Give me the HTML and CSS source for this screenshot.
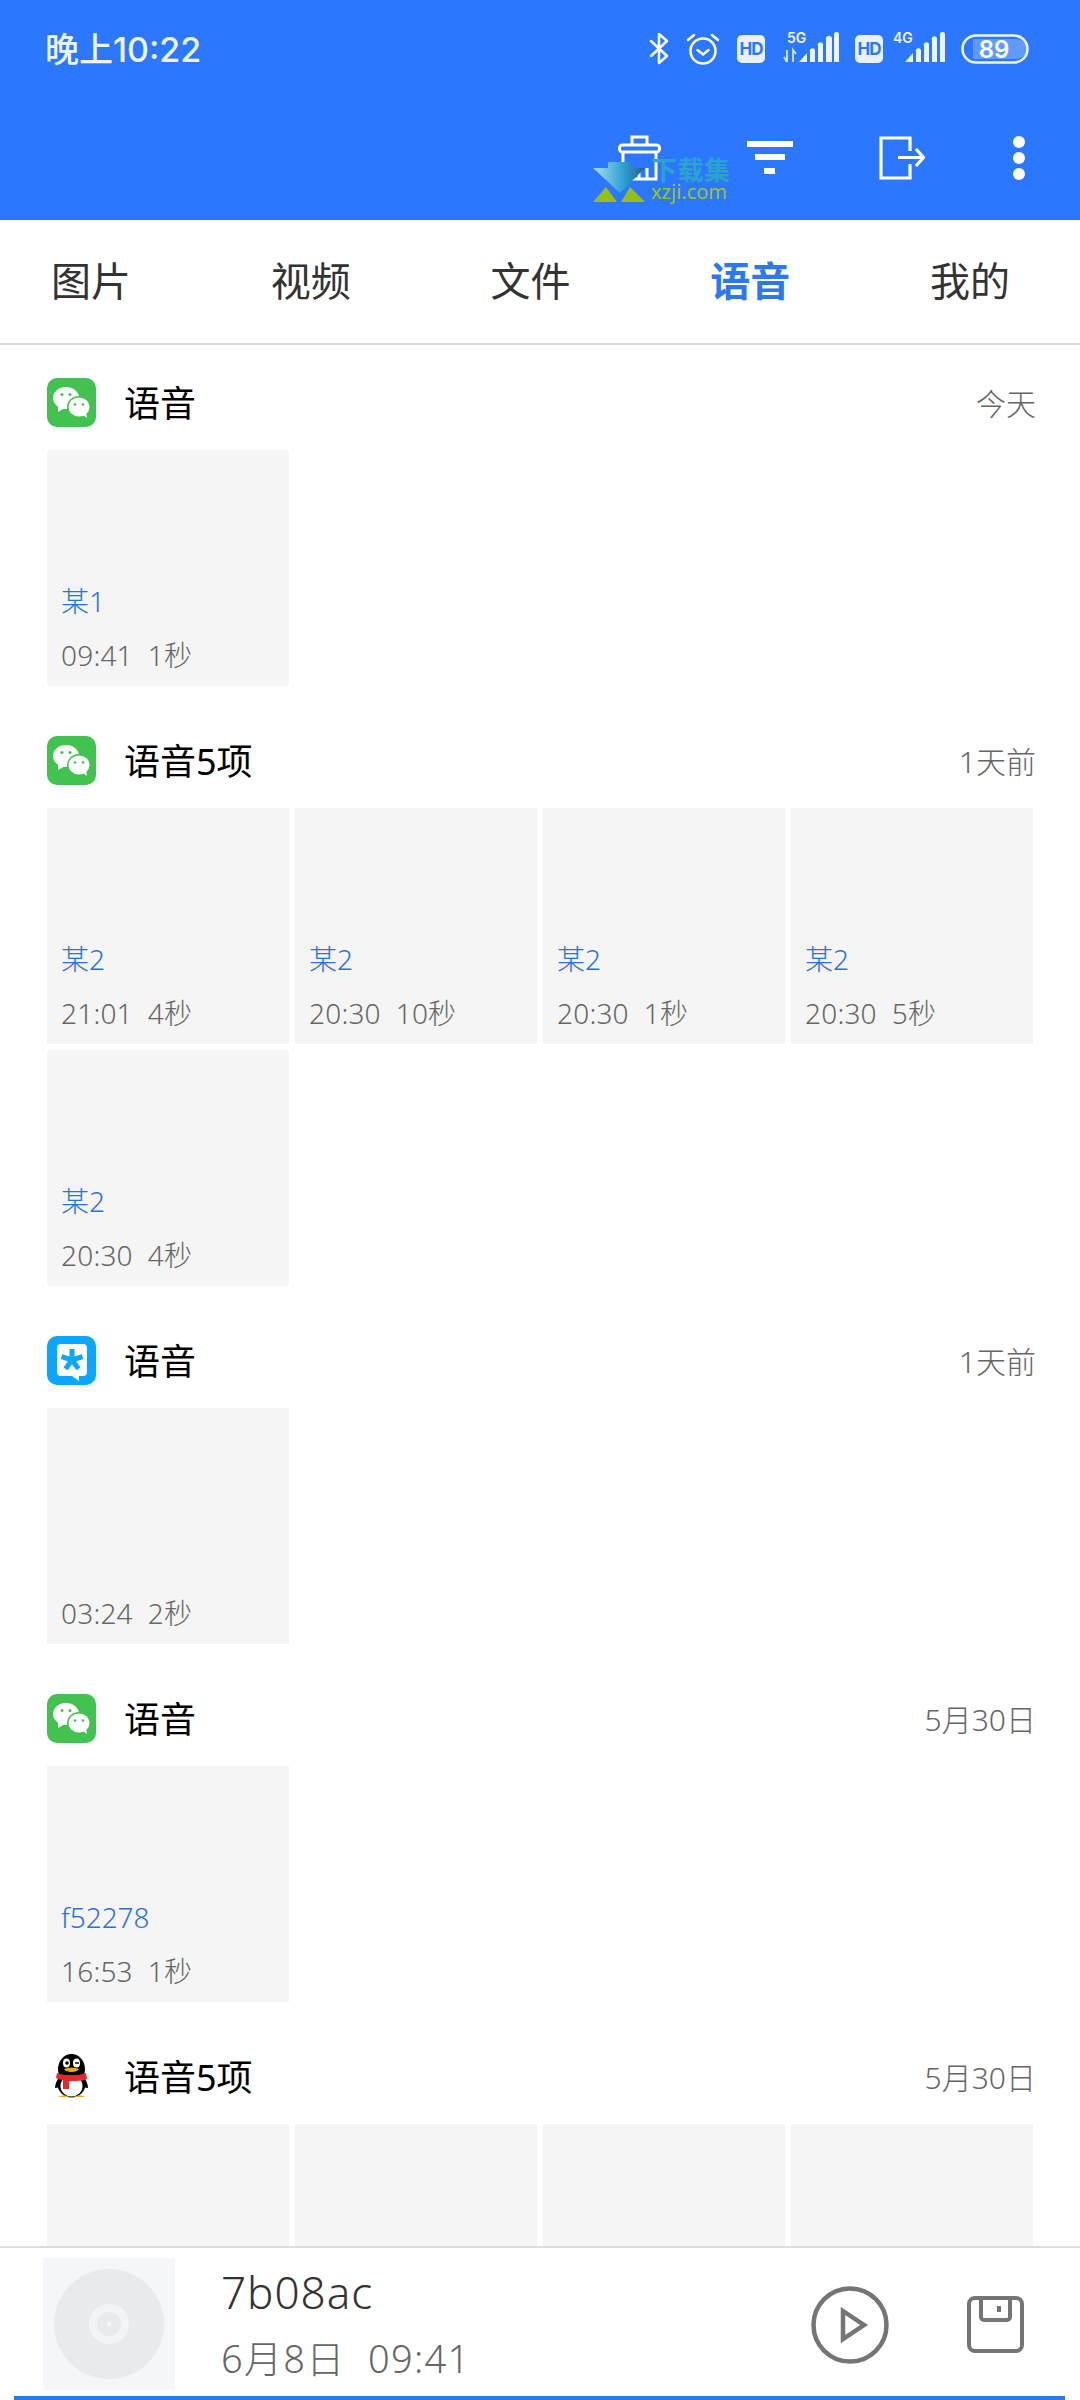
FILE: index.html
```html
<!DOCTYPE html>
<html lang="zh-CN">
<head>
    <meta charset="UTF-8">
    <meta name="viewport" content="width=device-width, initial-scale=1.0">
    <title>语音</title>
    <link rel="stylesheet" href="styles.css">
</head>
<body>
    <svg class="defs" width="0" height="0">
        <symbol id="wechat" viewBox="0 0 49 49">
            <rect width="49" height="49" rx="10" fill="#42c34f"/>
            <ellipse cx="19" cy="20" rx="13" ry="11" fill="#fff"/>
            <path d="M11 27l0 7 7-4z" fill="#fff"/>
            <ellipse cx="32" cy="29" rx="12" ry="11" fill="#42c34f"/>
            <ellipse cx="32" cy="29" rx="10.500" ry="9.500" fill="#fff"/>
            <path d="M36 37l4 3-1-6z" fill="#fff"/>
            <circle cx="15" cy="16.500" r="1.500" fill="#42c34f"/>
            <circle cx="23" cy="16.500" r="1.500" fill="#42c34f"/>
            <circle cx="28" cy="26.500" r="1.300" fill="#42c34f"/>
            <circle cx="36" cy="26.500" r="1.300" fill="#42c34f"/>
        </symbol>
        <symbol id="tim" viewBox="0 0 49 49">
            <rect width="49" height="49" rx="10" fill="#0aa6ff"/>
            <path d="M14 8h22a4 4 0 0 1 4 4v24a4 4 0 0 1-4 4h-4v5l-7-5H14a4 4 0 0 1-4-4V12a4 4 0 0 1 4-4z" fill="#fff"/>
            <path d="M25 24V13M25 24l10.500-3.400M25 24l6.500 8.900M25 24l-6.500 8.900M25 24l-10.500-3.400" stroke="#0aa6ff" stroke-width="5"/>
        </symbol>
        <symbol id="qq" viewBox="0 0 49 49">
            <path d="M13 24c-3 4-5 8-5 12 3 0 5-2 6-3zM36 24c3 4 5 8 5 12-3 0-5-2-6-3z" fill="#000"/>
            <ellipse cx="24.500" cy="17" rx="13.500" ry="15" fill="#000"/>
            <ellipse cx="24.500" cy="32" rx="14" ry="13.500" fill="#000"/>
            <ellipse cx="24.500" cy="34" rx="11" ry="10.500" fill="#fff"/>
            <ellipse cx="19.500" cy="11" rx="3.500" ry="4.500" fill="#fff"/>
            <ellipse cx="29.500" cy="11" rx="3.500" ry="4.500" fill="#fff"/>
            <circle cx="20" cy="11" r="1.800" fill="#000"/>
            <path d="M28 11h4" stroke="#000" stroke-width="1.500"/>
            <path d="M10 21c9 3 20 3 29 0l1 6c-3 1-6 2-11 2H22v8h-6v-9c-3 0-5-1-7-2z" fill="#e9262c"/>
            <path d="M17 17c5-2 10-2 15 0-2 4-13 4-15 0z" fill="#f5a81c"/>
            <path d="M11 45c3-2 9-2 11 0zM27 45c3-2 9-2 11 0z" fill="#f5a81c"/>
        </symbol>
    </svg>

    <div class="app">
        <header class="top">
            <div class="status">
                <span class="time">晚上10:22</span>
                <div class="status-icons">
                    <svg width="20" height="33" viewBox="0 0 20 33" fill="none" stroke="#fff" stroke-width="2.500" stroke-linejoin="round" stroke-linecap="round">
                        <path d="M2 9l16 15-8 7V2l8 7L2 24"/>
                    </svg>
                    <svg width="34" height="33" viewBox="0 0 34 33" fill="none" stroke="#fff" stroke-width="2.500" stroke-linecap="round" stroke-linejoin="round">
                        <circle cx="17" cy="19" r="12.500"/>
                        <path d="M11.500 18l5.500 4.500 5.500-4.500M2 8l6-5M32 8l-6-5"/>
                    </svg>
                    <span class="hd">HD</span>
                    <svg class="sig" width="56" height="34" viewBox="0 -4 56 34">
                        <text class="net" x="4" y="11">5G</text>
                        <path d="M4 18v12M1 25l3 5M10 30V18l3 4" fill="none" stroke="#fff" stroke-width="1.800" opacity=".8"/>
                        <path d="M16 30l8-9v9zM27 20a2 2 0 0 1 5-2v12h-5zM35 14a2 2 0 0 1 5-2v18h-5zM43 8a2 2 0 0 1 6-2v24h-6zM51 3a2 2 0 0 1 5-1v28h-5z" fill="#eef4ff"/>
                    </svg>
                    <span class="hd">HD</span>
                    <svg class="sig" width="52" height="34" viewBox="0 -4 52 34">
                        <text class="net" x="0" y="11">4G</text>
                        <path d="M12 30l8-9v9zM23 20a2 2 0 0 1 5-2v12h-5zM31 14a2 2 0 0 1 5-2v18h-5zM39 8a2 2 0 0 1 5-2v24h-5zM47 3a2 2 0 0 1 5-1v28h-5z" fill="#eef4ff"/>
                    </svg>
                    <svg width="68" height="30" viewBox="0 0 68 30">
                        <rect x="1.500" y="1.500" width="65" height="27" rx="13.500" fill="none" stroke="#eef4ff" stroke-width="2.500"/>
                        <path d="M16 5h40a10 10 0 0 1 0 20H16a3 3 0 0 1-4-4V9a3 3 0 0 1 4-4z" fill="#fff" opacity=".25"/>
                        <text class="batt" x="33" y="23.500">89</text>
                    </svg>
                </div>
            </div>
            <div class="toolbar">
                <svg width="43" height="46" viewBox="0 0 43 46" fill="none" stroke="#fff" stroke-width="3">
                    <path d="M14 10V2h15v8"/>
                    <rect x="1.500" y="10" width="40" height="7" rx="3"/>
                    <path d="M5 17v27h33V17M14 44V33M21 44V33M29 44V33"/>
                </svg>
                <svg width="46" height="34" viewBox="0 0 46 34" fill="#fff">
                    <rect width="46" height="6"/>
                    <rect x="8" y="13" width="30" height="6"/>
                    <rect x="17" y="27" width="11" height="6"/>
                </svg>
                <svg width="46" height="44" viewBox="0 0 46 44" fill="none" stroke="#fff" stroke-width="3.200">
                    <path d="M31 15V2H2v40h29V28"/>
                    <path d="M19 21.500h25M37 13l7.500 8.500-7.500 8.500"/>
                </svg>
                <svg width="16" height="48" viewBox="0 0 16 48" fill="#fff">
                    <circle cx="8" cy="8" r="6"/>
                    <circle cx="8" cy="24" r="6"/>
                    <circle cx="8" cy="40" r="6"/>
                </svg>
            </div>

            <!-- site watermark sitting on the toolbar -->
            <div class="mark">
                <svg class="mark-logo" width="52" height="42" viewBox="0 0 52 42">
                    <defs>
                        <linearGradient id="arrow" x1="0" y1="0" x2="1" y2="0">
                            <stop offset="0" stop-color="#a8def0"/>
                            <stop offset=".6" stop-color="#2a9fd2"/>
                            <stop offset="1" stop-color="#2c5f86"/>
                        </linearGradient>
                    </defs>
                    <path d="M0 7h15V1h23v6h14L27 32z" fill="url(#arrow)"/>
                    <path d="M0 41l13-15 11 15zM28 41l9-15 15 15z" fill="#93bf17"/>
                </svg>
                <div class="mark-text">
                    <span class="mark-cn">下载集</span>
                    <span class="mark-en">xzji.com</span>
                </div>
            </div>
        </header>

        <nav class="tabs">
            <span>图片</span>
            <span>视频</span>
            <span>文件</span>
            <span class="on">语音</span>
            <span>我的</span>
        </nav>

        <main class="list">
            <section class="group">
                <div class="group-head">
                    <svg class="app-icon"><use href="#wechat"/></svg>
                    <span class="group-title">语音</span>
                    <span class="group-date">今天</span>
                </div>
                <div class="cards">
                    <div class="card"><p class="who">某1</p><p class="meta">09:41&nbsp;&nbsp;1秒</p></div>
                </div>
            </section>

            <section class="group">
                <div class="group-head">
                    <svg class="app-icon"><use href="#wechat"/></svg>
                    <span class="group-title">语音5项</span>
                    <span class="group-date">1天前</span>
                </div>
                <div class="cards">
                    <div class="card"><p class="who">某2</p><p class="meta">21:01&nbsp;&nbsp;4秒</p></div>
                    <div class="card"><p class="who">某2</p><p class="meta">20:30&nbsp;&nbsp;10秒</p></div>
                    <div class="card"><p class="who">某2</p><p class="meta">20:30&nbsp;&nbsp;1秒</p></div>
                    <div class="card"><p class="who">某2</p><p class="meta">20:30&nbsp;&nbsp;5秒</p></div>
                    <div class="card"><p class="who">某2</p><p class="meta">20:30&nbsp;&nbsp;4秒</p></div>
                </div>
            </section>

            <section class="group">
                <div class="group-head">
                    <svg class="app-icon"><use href="#tim"/></svg>
                    <span class="group-title">语音</span>
                    <span class="group-date">1天前</span>
                </div>
                <div class="cards">
                    <div class="card"><p class="meta">03:24&nbsp;&nbsp;2秒</p></div>
                </div>
            </section>

            <section class="group">
                <div class="group-head">
                    <svg class="app-icon"><use href="#wechat"/></svg>
                    <span class="group-title">语音</span>
                    <span class="group-date">5月30日</span>
                </div>
                <div class="cards">
                    <div class="card"><p class="who">f52278</p><p class="meta">16:53&nbsp;&nbsp;1秒</p></div>
                </div>
            </section>

            <section class="group">
                <div class="group-head">
                    <svg class="app-icon"><use href="#qq"/></svg>
                    <span class="group-title">语音5项</span>
                    <span class="group-date">5月30日</span>
                </div>
                <div class="cards">
                    <div class="card"></div>
                    <div class="card"></div>
                    <div class="card"></div>
                    <div class="card"></div>
                </div>
            </section>
        </main>

        <footer class="player">
            <div class="cover">
                <svg width="110" height="110" viewBox="0 0 110 110">
                    <circle cx="55" cy="55" r="55" fill="#e8eaed"/>
                    <circle cx="55" cy="55" r="20" fill="#f2f4f7"/>
                    <circle cx="55" cy="55" r="12" fill="#e8eaed"/>
                    <circle cx="55" cy="55" r="2" fill="#f7f8fa"/>
                </svg>
            </div>
            <div class="track">
                <p class="track-name">7b08ac</p>
                <p class="track-date">6月8日&nbsp;&nbsp;09:41</p>
            </div>
            <svg class="play" width="78" height="78" viewBox="0 0 78 78" fill="none" stroke="#757575" stroke-width="4.500">
                <circle cx="39" cy="39" r="36.500"/>
                <path d="M32 25l21 14-21 14z"/>
            </svg>
            <svg class="save" width="57" height="57" viewBox="0 0 57 57" fill="none" stroke="#757575" stroke-width="4">
                <rect x="2" y="2" width="53" height="53" rx="6"/>
                <path d="M14 2v19a3 3 0 0 0 3 3h23a3 3 0 0 0 3-3V2M32 10v6"/>
            </svg>
            <div class="progress"></div>
        </footer>
    </div>
</body>
</html>
```

FILE: styles.css
```css
* {
    box-sizing: border-box;
}

body {
    margin: 0;
    background: #fff;
    font-family: "Noto Sans", "Noto Sans CJK SC", sans-serif;
}

p {
    margin: 0;
}

.defs {
    position: absolute;
}

.app {
    width: 1080px;
    height: 2400px;
    display: flex;
    flex-direction: column;
    overflow: hidden;
}

/* blue header */
.top {
    position: relative;
    height: 220px;
    flex: none;
    background: #2b78ff;
    padding-top: 32px;
}

.status {
    display: flex;
    align-items: center;
    height: 33px;
    padding: 0 51px 0 45px;
    color: #eef4ff;
}

.time {
    margin-top: -3px;
    font-family: "Inter", "Noto Sans CJK SC", sans-serif;
    font-size: 34px;
    font-weight: 500;
}

.status-icons {
    display: flex;
    align-items: center;
    margin-left: auto;
}

.status-icons svg:nth-child(1),
.status-icons svg:nth-child(2) {
    margin-right: 17px;
}

.status-icons .sig {
    margin-bottom: 7px;
}

.status-icons svg:nth-child(4) {
    margin-left: 18px;
    margin-right: 16px;
}

.status-icons svg:nth-child(6) {
    margin-left: 10px;
    margin-right: 16px;
}

.hd {
    width: 28px;
    height: 28px;
    border-radius: 5px;
    background: #e9f1ff;
    color: #2b78ff;
    font-family: "Inter", sans-serif;
    font-size: 17px;
    font-weight: 700;
    line-height: 28px;
    text-align: center;
    letter-spacing: -1px;
}

.net {
    font-family: "Inter", sans-serif;
    font-size: 14px;
    font-weight: 600;
    fill: #eef4ff;
}

.batt {
    font-family: "Inter", sans-serif;
    font-size: 24px;
    font-weight: 600;
    fill: #fff;
    text-anchor: middle;
}

.toolbar {
    display: flex;
    align-items: center;
    justify-content: flex-end;
    gap: 86px;
    height: 48px;
    margin-top: 69px;
    padding-right: 53px;
}

.mark {
    position: absolute;
    left: 593px;
    top: 159px;
    display: flex;
    gap: 6px;
}

.mark-logo {
    margin-top: 2px;
}

.mark-text {
    display: flex;
    flex-direction: column;
}

.mark-cn {
    font-size: 26px;
    font-weight: 700;
    line-height: 23px;
    letter-spacing: 0.5px;
    color: #2ba2cf;
}

.mark-en {
    font-size: 20px;
    line-height: 20px;
    color: #9ac31c;
}

/* tabs */
.tabs {
    height: 125px;
    flex: none;
    display: flex;
    align-items: center;
    justify-content: space-between;
    padding: 0 70px 5px 51px;
    border-bottom: 2px solid #ddd;
    font-size: 40px;
    color: #333;
}

.tabs .on {
    color: #2b78f0;
    font-weight: 700;
}

/* list of groups */
.list {
    flex: 1;
    min-height: 0;
    overflow: hidden;
    padding: 33px 44px 0 47px;
}

.group {
    margin-bottom: 50px;
}

.group-head {
    display: flex;
    align-items: center;
    height: 49px;
    margin-bottom: 23px;
}

.app-icon {
    width: 49px;
    height: 49px;
    flex: none;
}

.group-title {
    margin: -2px 0 0 28px;
    font-size: 36px;
    color: #000;
}

.group-date {
    margin: -2px 0 0 auto;
    font-size: 30px;
    font-weight: 300;
    color: #666;
}

.cards {
    display: grid;
    grid-template-columns: repeat(4, 242px);
    gap: 6px;
}

.card {
    height: 236px;
    display: flex;
    flex-direction: column;
    justify-content: flex-end;
    padding: 0 14px 11px;
    background: #f5f5f5;
}

.who {
    margin-bottom: 14px;
    font-size: 28px;
    font-weight: 300;
    line-height: 40px;
    color: #2b70e0;
}

.meta {
    font-size: 28px;
    font-weight: 300;
    line-height: 40px;
    letter-spacing: 0.2px;
    color: #666;
}

/* bottom player */
.player {
    position: relative;
    height: 154px;
    flex: none;
    display: flex;
    align-items: flex-start;
    padding: 10px 56px 0 43px;
    border-top: 2px solid #ddd;
    background: #fff;
}

.cover {
    width: 132px;
    height: 132px;
    flex: none;
    display: flex;
    align-items: center;
    justify-content: center;
    background: #f4f6fa;
}

.track {
    margin-left: 46px;
    flex: 1;
}

.track-name {
    margin-top: 4px;
    font-size: 44px;
    line-height: 60px;
    font-weight: 300;
    letter-spacing: 1px;
    color: #333;
}

.track-date {
    margin-top: 11px;
    font-size: 38px;
    line-height: 50px;
    font-weight: 300;
    letter-spacing: 1.300px;
    color: #666;
}

.play {
    margin-top: 28px;
    flex: none;
}

.save {
    margin: 38px 0 0 78px;
    flex: none;
}

.progress {
    position: absolute;
    left: 14px;
    right: 15px;
    bottom: 0;
    height: 4px;
    background: #2b78ea;
}
```
